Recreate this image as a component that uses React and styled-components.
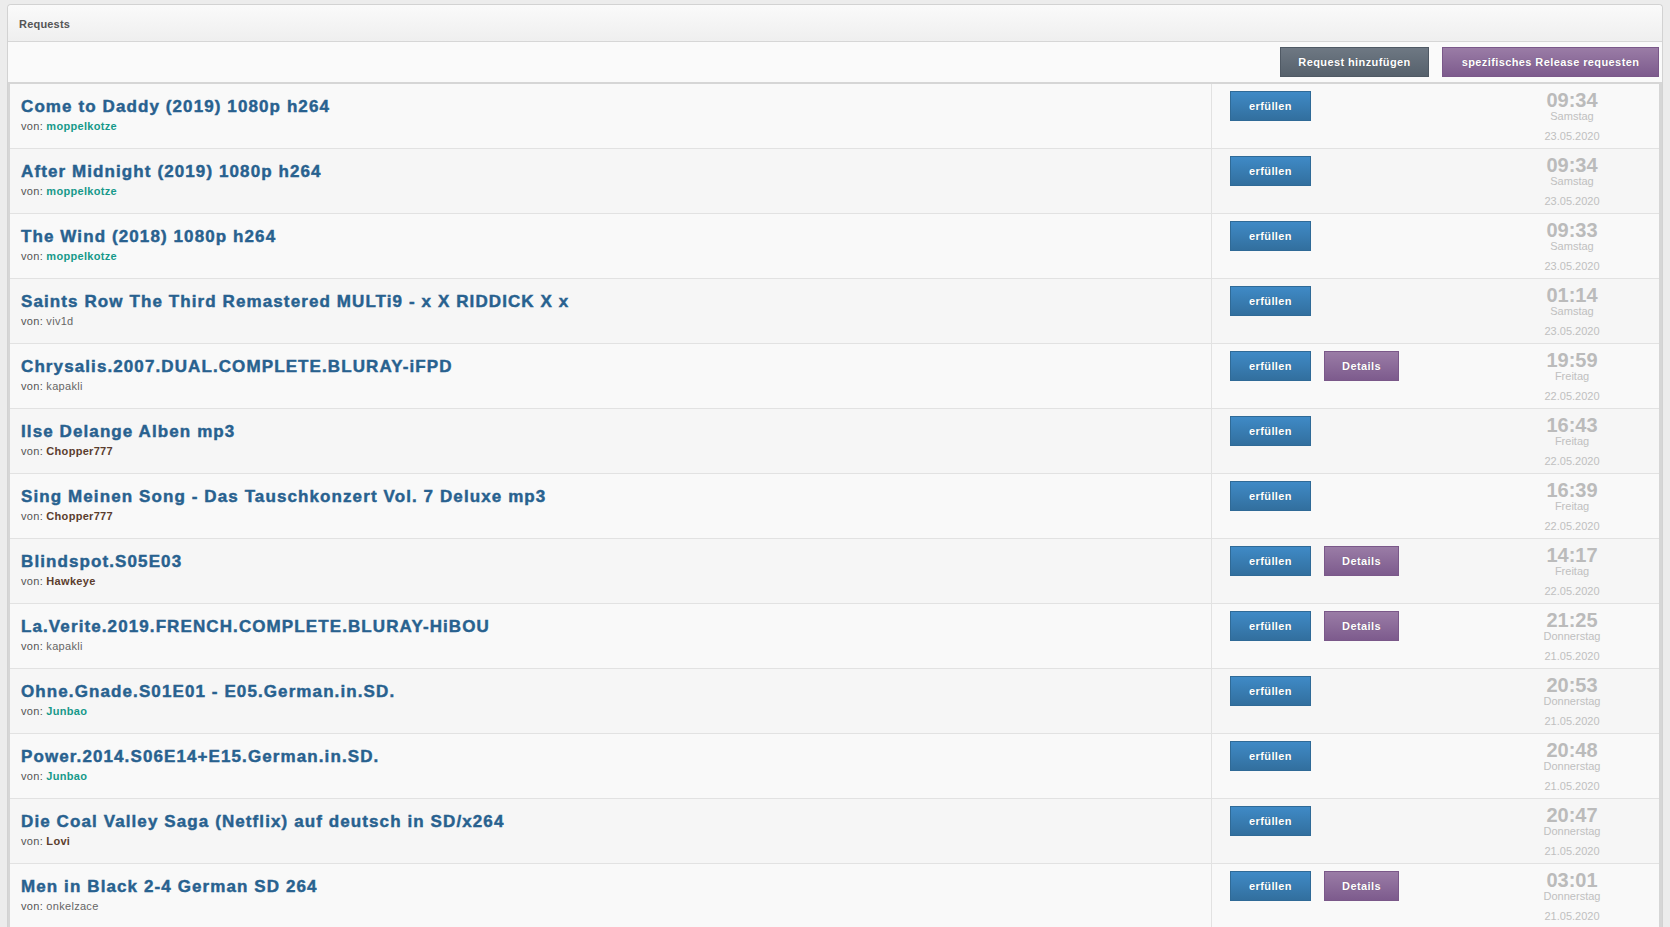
import React from "react";
import styled, { createGlobalStyle } from "styled-components";

const GlobalStyle = createGlobalStyle`
  html, body {
    margin: 0;
    padding: 0;
    background: #ececec;
    font-family: "Liberation Sans", Arial, sans-serif;
  }
`;

const requests = [
  { id: 1, title: "Come to Daddy (2019) 1080p h264", user: "moppelkotze", rank: "team", time: "09:34", day: "Samstag", date: "23.05.2020" },
  { id: 2, title: "After Midnight (2019) 1080p h264", user: "moppelkotze", rank: "team", time: "09:34", day: "Samstag", date: "23.05.2020" },
  { id: 3, title: "The Wind (2018) 1080p h264", user: "moppelkotze", rank: "team", time: "09:33", day: "Samstag", date: "23.05.2020" },
  { id: 4, title: "Saints Row The Third Remastered MULTi9 - x X RIDDICK X x", user: "viv1d", rank: "user", time: "01:14", day: "Samstag", date: "23.05.2020" },
  { id: 5, title: "Chrysalis.2007.DUAL.COMPLETE.BLURAY-iFPD", user: "kapakli", rank: "user", time: "19:59", day: "Freitag", date: "22.05.2020", details: true },
  { id: 6, title: "Ilse Delange Alben mp3", user: "Chopper777", rank: "member", time: "16:43", day: "Freitag", date: "22.05.2020" },
  { id: 7, title: "Sing Meinen Song - Das Tauschkonzert Vol. 7 Deluxe mp3", user: "Chopper777", rank: "member", time: "16:39", day: "Freitag", date: "22.05.2020" },
  { id: 8, title: "Blindspot.S05E03", user: "Hawkeye", rank: "member", time: "14:17", day: "Freitag", date: "22.05.2020", details: true },
  { id: 9, title: "La.Verite.2019.FRENCH.COMPLETE.BLURAY-HiBOU", user: "kapakli", rank: "user", time: "21:25", day: "Donnerstag", date: "21.05.2020", details: true },
  { id: 10, title: "Ohne.Gnade.S01E01 - E05.German.in.SD.", user: "Junbao", rank: "team", time: "20:53", day: "Donnerstag", date: "21.05.2020" },
  { id: 11, title: "Power.2014.S06E14+E15.German.in.SD.", user: "Junbao", rank: "team", time: "20:48", day: "Donnerstag", date: "21.05.2020" },
  { id: 12, title: "Die Coal Valley Saga (Netflix) auf deutsch in SD/x264", user: "Lovi", rank: "member", time: "20:47", day: "Donnerstag", date: "21.05.2020" },
  { id: 13, title: "Men in Black 2-4 German SD 264", user: "onkelzace", rank: "user", time: "03:01", day: "Donnerstag", date: "21.05.2020", details: true },
];

const rankColors = {
  team: "#16998a",
  member: "#5b3d2e",
  user: "#666666",
};

const buttonColors = {
  blue: { top: "#3f8ac6", bottom: "#326f9e", border: "#2f6a97" },
  purple: { top: "#9a7ca6", bottom: "#7d5b8d", border: "#7a5889" },
  gray: { top: "#6e7883", bottom: "#56616c", border: "#4f5964" },
};

function App() {
  return (
    <>
      <GlobalStyle />
      <Page>
        <Panel>
          <PanelHeader>Requests</PanelHeader>
          <Toolbar>
            <Button $color="gray" $w={149}>Request hinzufügen</Button>
            <Button $color="purple" $w={217}>spezifisches Release requesten</Button>
          </Toolbar>
          <List>
            {requests.map((req) => (
              <Row key={req.id}>
                <TitleCell>
                  <Title href="#">{req.title}</Title>
                  <Author>
                    von: <UserName $rank={req.rank}>{req.user}</UserName>
                  </Author>
                </TitleCell>
                <ActionCell>
                  <Button $color="blue" $w={81}>erfüllen</Button>
                  {req.details && (
                    <Button $color="purple" $w={75}>Details</Button>
                  )}
                </ActionCell>
                <TimeCell>
                  <Clock>{req.time}</Clock>
                  <Day>{req.day}</Day>
                  <DateText>{req.date}</DateText>
                </TimeCell>
              </Row>
            ))}
          </List>
        </Panel>
      </Page>
    </>
  );
}

const Page = styled.div`
  padding: 4px 7px 0 7px;
  height: 927px;
  box-sizing: border-box;
  overflow: hidden;
`;

const Panel = styled.div`
  border: 1px solid #d2d2d2;
  border-bottom: none;
  border-radius: 4px 4px 0 0;
  background: #f9f9f9;
`;

const PanelHeader = styled.div`
  height: 36px;
  line-height: 38px;
  padding-left: 11px;
  font-size: 11px;
  font-weight: bold;
  letter-spacing: 0.2px;
  color: #555;
  background: linear-gradient(#fafafa, #efefef);
  border-bottom: 1px solid #d6d6d6;
  border-radius: 4px 4px 0 0;
`;

const Toolbar = styled.div`
  height: 40px;
  display: flex;
  justify-content: flex-end;
  align-items: center;
  gap: 13px;
  padding-right: 3px;
  background: #fafafa;
  border-bottom: 2px solid #d6d6d6;
`;

const Button = styled.button`
  width: ${(p) => p.$w}px;
  height: 30px;
  padding: 0;
  font-family: "Liberation Sans", Arial, sans-serif;
  font-size: 11px;
  font-weight: bold;
  letter-spacing: 0.4px;
  color: #fff;
  text-shadow: 0 0 1px rgba(0, 0, 0, 0.25);
  border: 1px solid ${(p) => buttonColors[p.$color].border};
  background: linear-gradient(
    ${(p) => buttonColors[p.$color].top},
    ${(p) => buttonColors[p.$color].bottom}
  );
  border-radius: 0;
  cursor: pointer;
`;

const List = styled.div`
  border-left: 2px solid #d6d6d6;
  border-right: 3px solid #d6d6d6;
`;

const Row = styled.div`
  display: grid;
  grid-template-columns: 1202px 1fr 174px;
  height: 65px;
  box-sizing: border-box;
  border-bottom: 1px solid #e2e2e2;
  background: #f6f6f6;

  &:nth-child(odd) {
    background: #f9f9f9;
  }
`;

const TitleCell = styled.div`
  padding: 13px 0 0 11px;
  border-right: 1px solid #e2e2e2;
`;

const Title = styled.a`
  display: block;
  font-size: 17px;
  line-height: 20px;
  font-weight: bold;
  letter-spacing: 1.1px;
  -webkit-text-stroke: 0.45px #28618f;
  color: #28628f;
  text-decoration: none;
`;

const Author = styled.div`
  margin-top: 3px;
  font-size: 11px;
  line-height: 13px;
  letter-spacing: 0.3px;
  color: #555;
`;

const UserName = styled.span`
  color: ${(p) => rankColors[p.$rank]};
  font-weight: ${(p) => (p.$rank === "user" ? "normal" : "bold")};
`;

const ActionCell = styled.div`
  display: flex;
  align-items: flex-start;
  gap: 13px;
  padding: 7px 0 0 18px;
`;

const TimeCell = styled.div`
  display: flex;
  flex-direction: column;
  align-items: center;
  padding-top: 6px;
  color: #c0c0c0;
`;

const Clock = styled.div`
  font-size: 20px;
  line-height: 20px;
  font-weight: bold;
  color: #bbb;
`;

const Day = styled.div`
  font-size: 11px;
  line-height: 12px;
`;

const DateText = styled.div`
  margin-top: 8px;
  font-size: 11px;
  line-height: 12px;
`;

export default App;
